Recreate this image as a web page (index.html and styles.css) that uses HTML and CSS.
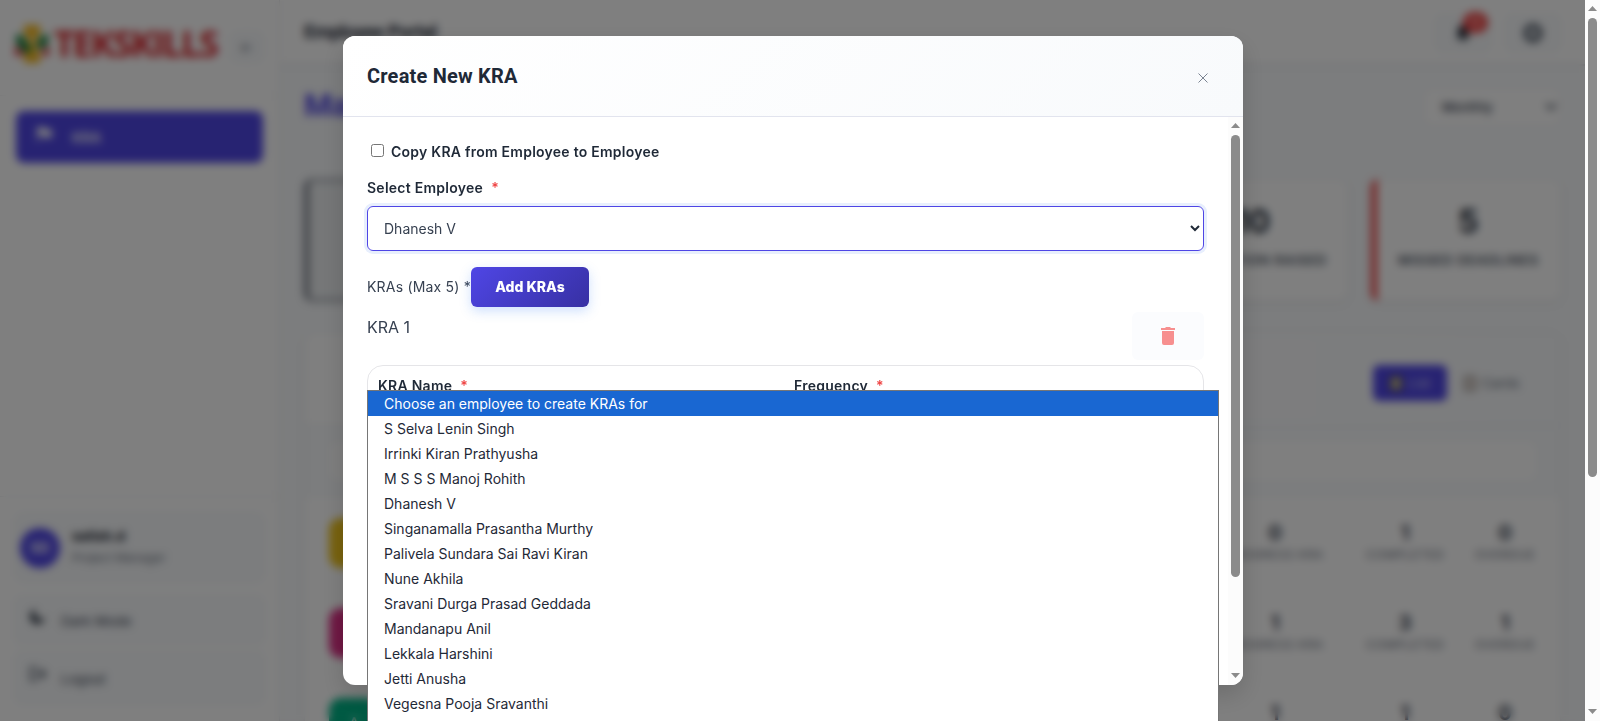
FILE: index.html
```html
<!DOCTYPE html>
<html lang="en">
<head>
<meta charset="utf-8">
<title>Employee Portal</title>
<link rel="stylesheet" href="styles.css">
</head>
<body>
<div class="viewport">
  <div class="page">
    <div class="app">
      <aside class="sidebar">
        <div class="brand">
          <svg class="brand-mark" width="36" height="42" viewBox="0 0 36 42">
            <path d="M10 2h16v10l-8 6-8-6z" fill="#f5b921"/>
            <path d="M10 40h16V30l-8-8-8 8z" fill="#f5b921"/>
            <path d="M18 14l6 7-6 7-4-7z" fill="#f5b921"/>
            <path d="M2 11l7 2 9 14-6 4L2 20z" fill="#17803d"/>
            <path d="M34 11l-7 2-5 10 5 4 7-7z" fill="#17803d"/>
            <path d="M1 22l10 9-10 2zM35 22l-9 9 9 2z" fill="#d8232a"/>
          </svg>
          <span class="brand-name">TEKSKILLS</span>
          <span class="collapse">←</span>
        </div>
        <nav class="nav">
          <a class="nav-item">
            <svg width="18" height="18" viewBox="0 0 18 18"><path d="M3 2v15M3 3h6l1 2h6v7h-6l-1-2H3z" fill="#fff" stroke="#fff" stroke-width="1.5"/></svg>
            <span>KRA</span>
          </a>
        </nav>
        <div class="side-footer">
          <div class="user">
            <span class="avatar">SD</span>
            <div class="user-text"><b>satish.d</b><span>Project Manager</span></div>
          </div>
          <div class="side-btn side-btn-dark">
            <svg width="18" height="18" viewBox="0 0 18 18"><path d="M7 2a6 6 0 0 0 9 8 7.500 7.500 0 1 1-9-8z" fill="#1f2937"/></svg>
            <span>Dark Mode</span>
          </div>
          <div class="side-btn">
            <svg width="18" height="18" viewBox="0 0 20 18"><path d="M9 2H2v14h7M7 9h10M13 4l5 5-5 5" fill="none" stroke="#374151" stroke-width="2"/></svg>
            <span>Logout</span>
          </div>
        </div>
      </aside>
      <div class="content">
        <header class="topbar">
          <b class="portal">Employee Portal</b>
          <div class="top-actions">
            <span class="top-btn">
              <svg width="20" height="20" viewBox="0 0 20 20"><path d="M10 2a5 5 0 0 0-5 5v5l-2 3h14l-2-3V7a5 5 0 0 0-5-5zM8 16h4v2H8z" fill="#1f2937"/></svg>
              <i class="count">10</i>
            </span>
            <span class="top-btn">
              <svg width="22" height="22" viewBox="0 0 22 22"><circle cx="11" cy="11" r="7" fill="none" stroke="#4b5563" stroke-width="5"/></svg>
            </span>
          </div>
        </header>
        <main class="main">
          <div class="heading">
            <h1>Manager</h1>
            <div class="period"><span>Monthly</span><svg width="12" height="8" viewBox="0 0 12 8"><path d="M1 1l5 5 5-5" fill="none" stroke="#374151" stroke-width="2"/></svg></div>
          </div>
          <div class="stats">
            <div class="stat stat-active"></div>
            <div class="stat"></div>
            <div class="stat"></div>
            <div class="stat"></div>
            <div class="stat"><b>10</b><span>ESCALATION RAISED</span></div>
            <div class="stat stat-red"><b>5</b><span>MISSED DEADLINES</span></div>
          </div>
          <section class="panel">
            <div class="panel-head">
              <div class="toggle">
                <span class="tab tab-on"><i class="tab-icon"></i>List</span>
                <span class="tab"><i class="tab-icon tab-icon-off"></i>Cards</span>
              </div>
            </div>
            <div class="panel-search"><div class="search"></div></div>
            <div class="rows">
              <div class="row"><i class="tile tile-yellow"></i>
                <div class="num num-wide"><b>0</b><span>PROGRESS KRA</span></div><div class="num num-mid"><b>1</b><span>COMPLETED</span></div><div class="num"><b>0</b><span>OVERDUE</span></div></div>
              <div class="row"><i class="tile tile-pink"></i>
                <div class="num num-wide"><b>1</b><span>PROGRESS KRA</span></div><div class="num num-mid"><b>3</b><span>COMPLETED</span></div><div class="num"><b>1</b><span>OVERDUE</span></div></div>
              <div class="row"><i class="tile tile-green">A</i>
                <div class="num num-wide num-last"><b>1</b></div><div class="num num-mid num-last"><b>1</b></div><div class="num num-last"><b>0</b></div></div>
            </div>
          </section>
        </main>
      </div>
    </div>
    <div class="overlay">
      <div class="modal">
        <div class="modal-head">
          <h2>Create New KRA</h2>
          <svg class="close" width="10" height="10" viewBox="0 0 10 10"><path d="M.5.5l9 9M9.500.5l-9 9" stroke="#7b8492" stroke-width="1"/></svg>
        </div>
        <div class="modal-body">
          <div class="form">
            <label class="copy"><input type="checkbox" class="check"><span>Copy KRA from Employee to Employee</span></label>
            <div class="label">Select Employee<i>*</i></div>
            <div class="select"><span>Dhanesh V</span><svg width="10" height="7" viewBox="0 0 10 7"><path d="M1 1l4 4 4-4" fill="none" stroke="#1f2937" stroke-width="2"/></svg></div>
            <div class="add-row"><span>KRAs (Max 5) *</span><button class="add">Add KRAs</button></div>
            <div class="kra-head">
              <span>KRA 1</span>
              <div class="delete"><svg width="14" height="18" viewBox="0 0 14 18"><path d="M1 4h12v12a2 2 0 0 1-2 2H3a2 2 0 0 1-2-2zM0 1h4l1-1h4l1 1h4v2H0z" fill="#f78f8f"/></svg></div>
            </div>
            <div class="kra-card">
              <div class="label">KRA Name<i>*</i></div>
              <div class="label">Frequency<i>*</i></div>
            </div>
          </div>
          <div class="scrollbar scrollbar-modal">
            <svg width="9" height="5" viewBox="0 0 9 5"><path d="M0 5L4.500 0 9 5z" fill="#8b8b8b"/></svg>
            <div class="thumb"></div>
            <svg width="9" height="5" viewBox="0 0 9 5"><path d="M0 0h9L4.500 5z" fill="#8b8b8b"/></svg>
          </div>
        </div>
      </div>
    </div>
    <ul class="options">
      <li class="hot">Choose an employee to create KRAs for</li>
      <li>S Selva Lenin Singh</li>
      <li>Irrinki Kiran Prathyusha</li>
      <li>M S S S Manoj Rohith</li>
      <li>Dhanesh V</li>
      <li>Singanamalla Prasantha Murthy</li>
      <li>Palivela Sundara Sai Ravi Kiran</li>
      <li>Nune Akhila</li>
      <li>Sravani Durga Prasad Geddada</li>
      <li>Mandanapu Anil</li>
      <li>Lekkala Harshini</li>
      <li>Jetti Anusha</li>
      <li>Vegesna Pooja Sravanthi</li>
    </ul>
  </div>
  <div class="scrollbar scrollbar-page">
    <svg width="9" height="5" viewBox="0 0 9 5"><path d="M0 5L4.500 0 9 5z" fill="#8b8b8b"/></svg>
    <div class="thumb"></div>
    <svg width="9" height="5" viewBox="0 0 9 5"><path d="M0 0h9L4.500 5z" fill="#8b8b8b"/></svg>
  </div>
</div>
</body>
</html>
```

FILE: styles.css
```css
* { box-sizing: border-box; }
body { margin: 0; font-family: Inter, "Liberation Sans", sans-serif; color: #1f2937; overflow: hidden; }
i { font-style: normal; }
.viewport { display: flex; width: 1600px; height: 721px; overflow: hidden; }
.page { position: relative; width: 1585px; height: 721px; overflow: hidden; }
.app { display: flex; height: 721px; background: #f8fafc; }

/* Sidebar */
.sidebar { width: 280px; height: 721px; background: #fff; border-right: 1px solid #e5e7eb; display: flex; flex-direction: column; }
.brand { height: 96px; padding: 0 14px 8px 14px; display: flex; align-items: center; border-bottom: 1px solid #f1f2f4; }
.brand-name { flex: none; font: 700 36px/42px "Open Sans", sans-serif; color: #d8232a; letter-spacing: -2px; margin-left: 4px; width: 172px; }
.collapse { flex: none; width: 34px; height: 32px; margin: 6px 0 0 4px; border-radius: 8px; background: #f8fafc; border: 1px solid #eef2f5; color: #6b7280; font-size: 16px; line-height: 30px; text-align: center; }
.nav { padding: 15px 16px; flex: 1; }
.nav-item { display: flex; align-items: center; gap: 19px; width: 247px; height: 52px; padding: 0 19px; border-radius: 8px; background: #4f46e5; color: #fff; font-weight: 600; font-size: 14px; }
.nav-item svg { margin-bottom: 6px; }
.side-footer { height: 225px; border-top: 1px solid #eceef1; padding: 15px 14px; }
.user { display: flex; align-items: center; gap: 12px; height: 71px; padding: 0 5px; background: #f8fafc; border: 1px solid #f1f5f9; border-radius: 10px; margin-bottom: 12px; }
.avatar { width: 40px; height: 40px; border-radius: 50%; background: #4f46e5; color: #fff; font-weight: 700; font-size: 14px; line-height: 40px; text-align: center; }
.user-text { display: flex; flex-direction: column; gap: 6px; font-size: 13.500px; line-height: 16px; margin-bottom: 2px; }
.user-text b { color: #111827; }
.user-text span { font-size: 12px; color: #6b7280; }
.side-btn { display: flex; align-items: center; gap: 14px; height: 54px; padding: 0 14px; background: #f8fafc; border: 1px solid #f1f5f9; border-radius: 8px; font-size: 13.500px; color: #374151; }
.side-btn svg { margin-bottom: 8px; }
.side-btn span { padding-top: 2px; }
.side-btn-dark { height: 50px; margin-bottom: 6px; }

/* Page content behind the dialog */
.content { flex: 1; min-width: 0; }
.topbar { height: 66px; background: #fff; border-bottom: 2px solid #e5e7eb; padding: 0 24px; display: flex; justify-content: space-between; align-items: center; }
.portal { font: 700 19px/24px Roboto, sans-serif; letter-spacing: -.5px; }
.top-actions { display: flex; gap: 14px; padding-top: 1px; }
.top-btn { position: relative; width: 56px; height: 38px; border-radius: 8px; background: #f8fafc; border: 1px solid #eef2f5; display: flex; align-items: center; justify-content: center; }
.count { position: absolute; left: 27px; top: -3px; width: 25px; height: 21px; border-radius: 11px; background: #ef4444; color: #fff; font-size: 10px; line-height: 21px; text-align: center; }
.main { padding: 18px 24px 0; }
.heading { display: flex; justify-content: space-between; height: 95px; }
h1 { margin: 0; font: 700 32px/42px Roboto, sans-serif; color: #4f46e5; }
.period { width: 138px; height: 38px; margin-top: 4px; border: 1px solid #f1f1f4; border-radius: 8px; background: #fff; display: flex; align-items: center; justify-content: space-between; padding: 0 3px 0 18px; font-size: 13px; font-weight: 500; color: #374151; }
.stats { display: grid; grid-template-columns: repeat(6, 1fr); gap: 23px; height: 122px; margin-bottom: 31px; }
.stat { background: #fff; border-radius: 8px; border: 1px solid #f1f3f5; box-shadow: 0 2px 5px rgba(0,0,0,.07); display: flex; flex-direction: column; align-items: center; padding-top: 23px; gap: 11px; white-space: nowrap; min-width: 0; }
.stat b { font-size: 32px; line-height: 38px; }
.stat span { font-size: 13.500px; line-height: 16px; font-weight: 600; color: #4b5563; letter-spacing: .6px; }
.stat-active { background: #eceff1; border: 2px solid #767b86; border-left-width: 5px; }
.stat-red { border-left: 6px solid #ef4444; }
.panel { height: 500px; background: #fff; border: 1px solid #eef0f3; border-radius: 12px; box-shadow: 0 2px 6px rgba(0,0,0,.05); overflow: hidden; }
.panel-head { height: 93px; border-bottom: 1px solid #e9edf2; padding: 32px 24px; display: flex; justify-content: flex-end; background: linear-gradient(90deg, #fff 20%, #f8fafc); }
.toggle { width: 163px; display: flex; }
.tab { display: flex; align-items: center; justify-content: center; gap: 6px; width: 74px; height: 36px; border-radius: 6px; font-size: 13.500px; color: #6b7280; }
.tab + .tab { width: 89px; }
.tab-on { background: #4f46e5; color: #c7c7f3; }
.tab-icon { width: 12px; height: 15px; background: #d8cda5; border: 2px solid #4a4533; }
.tab-icon-off { background: #e5ddd8; border-color: #978e88; }
.panel-search { height: 72px; background: #f8fafc; padding: 16px 24px; }
.search { height: 38px; border-radius: 8px; background: #fff; }
.rows { padding: 0 24px; }
.row { height: 90px; display: flex; align-items: center; border-bottom: 1px solid #f1f2f4; }
.tile { width: 50px; height: 50px; border-radius: 12px; margin-right: auto; color: #fff; font-size: 16px; line-height: 50px; text-align: center; }
.tile-yellow { background: #f2c61c; }
.tile-pink { background: #e03088; }
.tile-green { background: #00b386; }
.num { display: flex; flex-direction: column; align-items: center; width: 62px; gap: 4px; margin-bottom: 2px; }
.num-mid { width: 138px; }
.num-wide { width: 122px; }
.num b { font-size: 20px; line-height: 22px; color: #374151; }
.num-last { padding-bottom: 18px; }
.num span { font-size: 12px; line-height: 14px; color: #6b7280; white-space: nowrap; letter-spacing: .5px; }

/* Dialog */
.overlay { position: absolute; inset: 0; background: rgba(0,0,0,.5); backdrop-filter: blur(4px); display: flex; justify-content: center; align-items: center; padding-left: 1px; }
.modal { width: 900px; height: 649px; background: #fff; border-radius: 12px; overflow: hidden; box-shadow: 0 10px 25px rgba(0,0,0,.15); display: flex; flex-direction: column; }
.modal-head { height: 81px; flex: none; border-bottom: 1px solid #e2e4ee; padding: 0 35px 0 24px; display: flex; justify-content: space-between; align-items: center; background: linear-gradient(135deg, #fff, #f8fafc); }
h2 { margin: 0; font: 700 20px/24px Roboto, sans-serif; letter-spacing: .2px; }
.close { margin-top: 3px; }
.modal-body { flex: 1; display: flex; justify-content: space-between; min-height: 0; }
.form { width: 861px; padding: 24px 0 0 24px; }
.copy { display: flex; align-items: center; height: 22px; font-size: 14px; font-weight: 600; letter-spacing: .25px; }
.copy span { padding-bottom: 2px; }
.check { width: 13px; height: 13px; margin: 0 7px 4px 4px; }
.label { font-size: 14px; font-weight: 600; line-height: 20px; letter-spacing: .26px; }
.label i { color: #ef4444; margin-left: 8px; }
.copy + .label { margin-top: 15px; }
.select { height: 45px; margin-top: 8px; border: 1px solid #4f46e5; border-radius: 6px; box-shadow: 0 0 0 3px #e8effd; padding: 0 3px 0 16px; display: flex; align-items: center; justify-content: space-between; font-size: 14px; color: #374151; }
.add-row { display: flex; align-items: center; margin-top: 16px; font-size: 14px; color: #374151; letter-spacing: .2px; }
.add-row span { padding-bottom: 1px; }
.add { width: 118px; height: 40px; border: 0; border-radius: 6px; background: linear-gradient(135deg, #4f46e5, #3730a3); box-shadow: 0 4px 12px rgba(59,130,246,.25); color: #fff; font: 800 14px/20px Inter, sans-serif; padding: 0; }
.kra-head { display: flex; justify-content: space-between; height: 48px; margin-top: 5px; font-size: 16px; line-height: 31px; color: #374151; }
.delete { width: 72px; height: 48px; border-radius: 6px; background: #fbfcfe; display: flex; align-items: center; justify-content: center; }
.kra-card { display: grid; grid-template-columns: 416px 1fr; height: 300px; margin-top: 5px; border: 1px solid #e5e5e8; border-radius: 16px; padding: 10px; }

/* Scrollbars */
.scrollbar { width: 15px; background: #fcfcfc; display: flex; flex-direction: column; align-items: center; flex: none; }
.thumb { width: 9px; border-radius: 5px; background: #8b8b8b; }
.scrollbar-modal { padding-top: 6px; }
.scrollbar-modal .thumb { height: 442px; margin: 7px 0 96px; }
.scrollbar-page { padding-top: 6px; }
.scrollbar-page .thumb { height: 459px; margin: 7px 0 232px; }

/* Native-style option list */
.options { position: absolute; left: 367px; top: 390px; width: 852px; height: 345px; margin: 0; padding: 0; list-style: none; background: #fff; border: 1px solid #767676; font-size: 14px; line-height: 25px; }
.options li { height: 25px; padding-left: 16px; }
.hot { background: #1967d2; color: #fff; }
```
